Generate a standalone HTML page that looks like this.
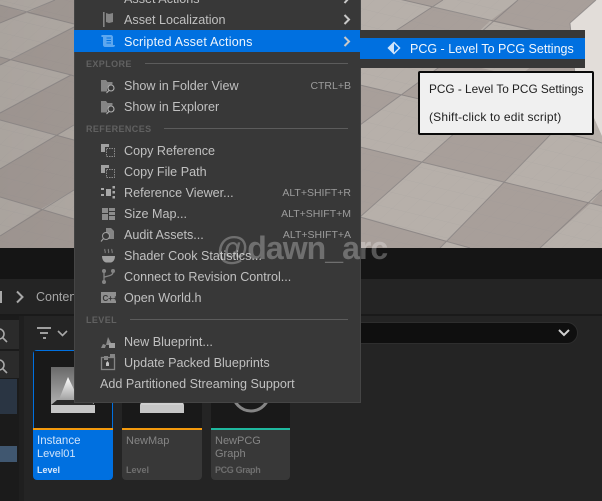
<!DOCTYPE html>
<html><head><meta charset="utf-8"><style>
html,body{margin:0;padding:0;background:#242424}
#r{position:relative;width:602px;height:501px;overflow:hidden;background:#242424;font-family:"Liberation Sans",sans-serif}
#r div{position:absolute;white-space:nowrap}
.t{font-size:12.6px;line-height:16px;color:#c0c0c0;left:124px}
.k{font-size:10.5px;line-height:14px;color:#9c9c9c;right:251px}
.h{font-size:9px;font-weight:bold;letter-spacing:.4px;line-height:12px;color:#616161;left:86px}
.l{height:1px;background:#5c5c5c}
.c{background:#383838;border-radius:4px;overflow:hidden;width:80px;height:130px;top:350px}
.c .th{left:0;top:0;width:80px;height:78px;background:#191919}
.n{font-size:11px;line-height:13px;color:#858585;left:4px}
.s{font-size:9px;font-weight:bold;line-height:11px;color:#6f6f6f;left:4px;top:115px}
</style></head><body><div id="r">

<svg style="position:absolute;left:0;top:0" width="602" height="248" viewBox="0 0 602 248">
<defs><pattern id="g" width="14" height="14" patternUnits="userSpaceOnUse" patternTransform="matrix(1 .245 -1 .9 0 0)"><path d="M0 0H14M0 0V14" stroke="#8d8a92" stroke-width=".5" fill="none" opacity=".2"/></pattern>
<linearGradient id="sh" x1="0" x2="1" y1="0" y2="0"><stop offset="0" stop-color="#000" stop-opacity=".07"/><stop offset=".6" stop-color="#000" stop-opacity="0"/></linearGradient></defs>
<rect width="602" height="248" fill="#a89f9a"/>
<g fill="#b7b0aa">
<polygon points="0,0 55,0 27,13 0,5"/><polygon points="0,23 27,13 74,24 74,27 11,60 0,57"/>
<polygon points="0,65 11,60 71,75 0,113"/><polygon points="0,120 57,135 0,169"/><polygon points="57,135 74,125 74,140"/>
<polygon points="0,197 41,209 0,236"/><polygon points="41,209 74,190 74,219"/>
<polygon points="360,-10 432,7 401,27 360,54"/><polygon points="432,7 443,0 518,0 490,21"/>
<polygon points="490,21 567,38 518,77 449,60"/><polygon points="378,42 449,60 401,95 360,85 360,38"/>
<polygon points="360,125 401,95 478,113 422,162 360,147"/><polygon points="360,217 422,162 504,182 447,241"/>
<polygon points="504,182 554,131 602,143 602,190 591,203"/><polygon points="540,248 591,203 602,206 602,248"/>
<polygon points="440,248 447,241 470,248"/>
<polygon points="518,77 600,95 602,96 602,143 554,131 478,113"/>
</g>
<rect width="602" height="248" fill="url(#g)"/>
<polygon points="570,23 596,0 602,0 602,136 575,75" fill="#e2ddd9"/>
<rect width="602" height="248" fill="url(#sh)"/>
<g stroke="#7f7b7c" stroke-width="1" fill="none" opacity=".65">
<path d="M0 5L74 24M0 57L71 75L74 76M0 120L74 140M0 197L74 219"/>
<path d="M0 23L55 0M0 65L74 27M0 113L71 75M0 169L74 125M0 236L74 190"/>
<path d="M360 -10L567 38M360 85L593 140L602 143M360 147L602 206M360 217L470 248"/>
<path d="M360 54L443 0M360 125L449 60L518 0M360 217L518 77M440 248L554 131M540 248L602 190"/>
<path d="M570 23L596 0M570 23L575 75"/>
</g>
</svg>

<div style="left:0;top:248px;width:602px;height:31px;background:#151515"></div>
<div style="left:0;top:279px;width:602px;height:35px;background:#242424"></div>
<div style="left:0;top:314px;width:602px;height:2px;background:#1a1a1a"></div>
<div style="left:0;top:291px;height:12px;background:#a8a8a8;width:2px"></div>
<svg style="position:absolute;left:14px;top:290px" width="12" height="14"><path d="M3 1.500L8.500 7L3 12.500" stroke="#a8a8a8" stroke-width="2" fill="none"/></svg>
<div style="left:36px;top:289px;font-size:12.500px;line-height:16px;color:#a5a5a5">Content</div>

<div style="left:0;top:316px;width:19px;height:185px;background:#1b1b1b"></div>
<div style="left:19px;top:316px;width:5px;height:185px;background:#1f1f1f"></div>
<div style="left:0;top:320px;width:19px;height:29px;background:#2b2b2b"></div>
<div style="left:0;top:351px;width:19px;height:27px;background:#2b2b2b"></div>
<svg style="position:absolute;left:0;top:324px" width="19" height="60"><g stroke="#a8a8a8" stroke-width="1.600" fill="none"><circle cx="-1" cy="10" r="5"/><path d="M3 14L7 18"/><circle cx="-1" cy="41" r="5"/><path d="M3 45L7 49"/></g></svg>
<div style="left:0;top:379px;width:17px;height:35px;background:#2a3543"></div>
<div style="left:0;top:446px;width:17px;height:16px;background:#405770"></div>

<svg style="position:absolute;left:36px;top:326px" width="34" height="16"><path d="M1 2H15M4 7H12M7 12H10" stroke="#c8c8c8" stroke-width="1.600" fill="none"/><path d="M22 5L26.500 9.500L31 5" stroke="#a8a8a8" stroke-width="1.600" fill="none"/></svg>

<div style="left:200px;top:322px;width:376px;height:20px;background:#0f0f0f;border:1px solid #2e2e2e;border-radius:11px"></div>
<svg style="position:absolute;left:557px;top:327px" width="14" height="12"><path d="M2 3L7 8L12 3" stroke="#d0d0d0" stroke-width="2" fill="none"/></svg>

<div class="c" style="left:33px;background:#0070e0">
 <div class="th" style="left:1px;top:1px;width:78px;height:77px"></div>
 <div style="left:0;top:78px;width:80px;height:2px;background:#f39a0e"></div>
 <svg style="position:absolute;left:0;top:0" width="80" height="78"><defs><linearGradient id="a" x1="0" x2="0" y1="0" y2="1"><stop offset="0" stop-color="#6a6a6a"/><stop offset="1" stop-color="#b0b0b0"/></linearGradient><linearGradient id="b" x1="0" x2="0" y1="0" y2="1"><stop offset="0" stop-color="#fff"/><stop offset="1" stop-color="#999"/></linearGradient></defs>
 <rect x="18" y="17" width="43" height="38" fill="url(#a)"/><polygon points="35,27 25,52 47,52" fill="url(#b)"/><polygon points="24,50 56,50 62,55 18,55" fill="#2a2a2a"/><rect x="18" y="55" width="44" height="8" fill="#c6c6c6"/></svg>
 <div class="n" style="top:85px;color:#cfe3fa;font-size:11.500px">Instance</div>
 <div class="n" style="top:98px;color:#cfe3fa">Level01</div>
 <div class="s" style="color:#d8e8fb">Level</div>
</div>
<div class="c" style="left:122px">
 <div class="th"></div><div style="left:0;top:78px;width:80px;height:2px;background:#f39a0e"></div>
 <svg style="position:absolute;left:0;top:0" width="80" height="78"><polygon points="20,50 60,50 62,55 18,55" fill="#d0d0d0"/><rect x="18" y="55" width="44" height="8" fill="#c6c6c6"/></svg>
 <div class="n" style="top:85px">NewMap</div><div class="s">Level</div>
</div>
<div class="c" style="left:211px;width:79px">
 <div class="th" style="width:79px"></div><div style="left:0;top:78px;width:79px;height:2px;background:#1fb89f"></div>
 <svg style="position:absolute;left:0;top:0" width="79" height="78"><circle cx="40" cy="43" r="18" stroke="#858585" stroke-width="3" fill="none"/><circle cx="40" cy="43" r="6" stroke="#858585" stroke-width="2" fill="none"/></svg>
 <div class="n" style="top:85px">NewPCG</div><div class="n" style="top:98px">Graph</div><div class="s" style="letter-spacing:-.35px">PCG Graph</div>
</div>

<div style="left:74px;top:-1px;width:285px;height:403px;background:#383838;border:1px solid #454545;border-top:0;box-sizing:content-box"></div>
<div style="left:74px;top:30px;width:286px;height:22px;background:#0070e0"></div>
<div style="left:360px;top:30px;width:225px;height:38px;background:#383838"></div>
<div style="left:360px;top:38px;width:225px;height:21px;background:#0070e0"></div>

<div class="t" style="top:-9px">Asset Actions</div>
<div class="t" style="top:12px">Asset Localization</div>
<div class="t" style="top:34px;color:#eef5fd;letter-spacing:.18px">Scripted Asset Actions</div>
<div class="h" style="top:58px">EXPLORE</div><div class="l" style="left:145px;top:63px;width:203px"></div>
<div class="t" style="top:78px">Show in Folder View</div><div class="k" style="top:79px">CTRL+B</div>
<div class="t" style="top:99px">Show in Explorer</div>
<div class="h" style="top:123px">REFERENCES</div><div class="l" style="left:164px;top:128px;width:184px"></div>
<div class="t" style="top:143px">Copy Reference</div>
<div class="t" style="top:164px">Copy File Path</div>
<div class="t" style="top:185px">Reference Viewer...</div><div class="k" style="top:186px">ALT+SHIFT+R</div>
<div class="t" style="top:206px">Size Map...</div><div class="k" style="top:207px">ALT+SHIFT+M</div>
<div class="t" style="top:227px">Audit Assets...</div><div class="k" style="top:228px">ALT+SHIFT+A</div>
<div class="t" style="top:248px">Shader Cook Statistics...</div>
<div class="t" style="top:269px">Connect to Revision Control...</div>
<div class="t" style="top:290px">Open World.h</div>
<div class="h" style="top:314px">LEVEL</div><div class="l" style="left:130px;top:319px;width:218px"></div>
<div class="t" style="top:334px">New Blueprint...</div>
<div class="t" style="top:355px">Update Packed Blueprints</div>
<div class="t" style="top:376px;left:100px">Add Partitioned Streaming Support</div>

<svg style="position:absolute;left:0;top:0" width="602" height="410" viewBox="0 0 602 410">
<g fill="none" stroke="#c8c8c8" stroke-width="2"><path d="M344.500 -7L349 -2L344.500 3"/><path d="M344.500 15L349 19.500L344.500 24"/><path d="M344.500 37L349 41.500L344.500 46"/></g>
<g fill="#858585">
<path d="M103 -8h10v5h-10z"/>
<path d="M103 12h1.600v15H103zM106 13l3 1 4-1v9l-4 1-3-1z"/>
<path d="M102 35h9c1 0 2 1 2 2v8h2c0 1.500-1 2-2 2h-8c-1 0-2-1-2-2v-8h-1c-1 0-1-2 0-2z" fill="#5da7ef"/><path d="M106.500 38h4.500M106.500 40.500h4.500M106.500 43h4.500" stroke="#0070e0" stroke-width="1.100"/>
<path d="M101 80h5l1.500 2h5v2.500a5 5 0 0 0-5 7H101z"/><circle cx="111" cy="88" r="3" fill="none" stroke="#b0b0b0" stroke-width="1.100"/><path d="M109 90.500L106.500 93" stroke="#b0b0b0" stroke-width="1.100"/>
<path d="M101 101h5l1.500 2h5v2.500a5 5 0 0 0-5 7H101z"/><circle cx="111" cy="109" r="3" fill="none" stroke="#b0b0b0" stroke-width="1.100"/><path d="M109 111.500L106.500 114" stroke="#b0b0b0" stroke-width="1.100"/>
<path d="M101 144h8v3h-4v5h-4z" fill="#a0a0a0"/><rect x="106.500" y="148.500" width="8" height="8" fill="none" stroke="#8c8c8c" stroke-dasharray="1.500 1"/>
<path d="M101 165h8v3h-4v5h-4z" fill="#a0a0a0"/><rect x="106.500" y="169.500" width="8" height="8" fill="none" stroke="#8c8c8c" stroke-dasharray="1.500 1"/>
<path d="M101 188h3v2h-3zM101 194h3v2h-3zM106 189h5v7h-5zM112.500 186h2.500v2.500h-2.500zM112.500 191h2.500v2.500h-2.500zM112.500 196h2.500v2.500h-2.500z" fill="#a8a8a8"/>
<path d="M102 208h6v5h-6zM102 214h6v6h-6zM109 208h6v3h-6zM109 212h6v3h-6zM109 216h6v4h-6z" fill="#8c8c8c"/>
<path d="M106 228h5l3 3v8h-8z"/><circle cx="106" cy="236" r="3.500" fill="#383838" stroke="#a0a0a0" stroke-width="1"/><path d="M103.500 238.500L101 241.500" stroke="#a0a0a0" stroke-width="1.100"/>
<path d="M102 256h13c0 4-2 6-4 6.500h-5c-2-.5-4-2.500-4-6.500z" fill="#a0a0a0"/><path d="M105 249c-1 1.500 1 2 0 4M108.500 249c-1 1.500 1 2 0 4M112 249c-1 1.500 1 2 0 4" stroke="#858585" fill="none"/>
<circle cx="104" cy="271" r="2"/><circle cx="113" cy="271" r="2"/><circle cx="104" cy="282" r="2"/><path d="M104 272v9M113 272c0 4-6 4-8.500 5" stroke="#858585" stroke-width="1.300" fill="none"/>
<rect x="101" y="292" width="15" height="11" fill="#8f8f8f"/><text x="102.500" y="301" font-size="8" font-weight="bold" fill="#383838" font-family="Liberation Sans,sans-serif">C++</text>
<path d="M101 348l2-4 3 1 2-8 3 6v2h-5l-1 3z" fill="#8a8a8a"/><rect x="109" y="343" width="6" height="5" fill="#a0a0a0"/>
<rect x="101.500" y="357.500" width="13" height="12" fill="none" stroke="#858585" stroke-width="1.300"/><path d="M104 356h4v4h-4zM110 354h5v3h-5z"/><path d="M106 366v-3l1.500-2 1.500 2v3z" fill="#c0c0c0"/>
</g>
<path d="M394 42.500L399.500 48L394 53.500L388.500 48Z" fill="none" stroke="#cfe3fa" stroke-width="1.500"/><path d="M394 42.500L388.500 48L394 53.500Z" fill="#cfe3fa"/>
</svg>

<div style="left:410px;top:41px;font-size:12.500px;line-height:16px;color:#f2f7fd">PCG - Level To PCG Settings</div>
<div style="left:418px;top:71px;width:172px;height:60px;background:#f0f0f0;border:2px solid #0a0a0a;border-radius:2px"></div>
<div style="left:429px;top:82px;font-size:11.800px;line-height:15px;color:#1e1e1e">PCG - Level To PCG Settings</div>
<div style="left:429px;top:110px;font-size:12px;line-height:15px;letter-spacing:.18px;color:#1e1e1e">(Shift-click to edit script)</div>

<div style="left:217px;top:230px;font-size:32px;line-height:37px;font-weight:bold;letter-spacing:-.95px;color:rgba(255,255,255,.28)">@dawn_arc</div>
</div></body></html>
